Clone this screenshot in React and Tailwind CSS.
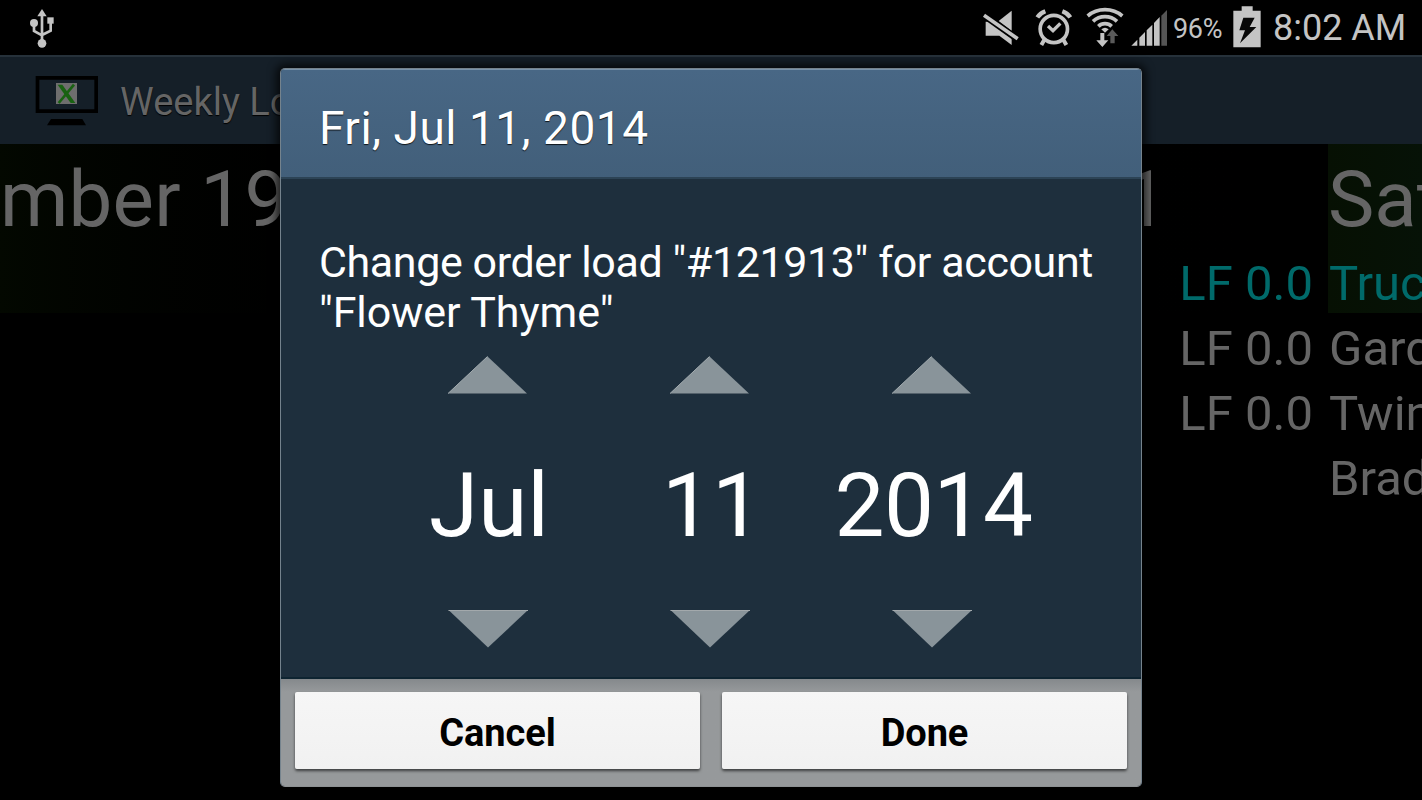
function UsbIcon() {
  return (
    <svg className="h-[42px] w-[28px]" viewBox="84 21 84 126" fill="#c4c4c4">
      <path d="M126 27l14 22h-28z" />
      <path d="M126 45v80M102 70v23l24 13M152 68v24l-26 13" fill="none" stroke="#c4c4c4" strokeWidth="8" />
      <circle cx="126" cy="130" r="13" />
      <circle cx="102" cy="69" r="12" />
      <path d="M142 52h19v19h-19z" />
    </svg>
  );
}

function MuteIcon() {
  return (
    <svg className="h-[40px] w-[38px]" viewBox="36 24 114 120" fill="#c4c4c4">
      <path d="M125 32v60L86 63z" />
      <path d="M47 65h10l68 50v20L88 107H47z" />
      <path d="M42 46l101 72" stroke="#000" strokeWidth="20" />
      <path d="M42 46l101 70" stroke="#c4c4c4" strokeWidth="11" />
    </svg>
  );
}

function AlarmIcon() {
  return (
    <svg className="h-[40px] w-[38px]" viewBox="195 24 114 120" fill="none" stroke="#c4c4c4">
      <circle cx="251.500" cy="87" r="41" strokeWidth="11" />
      <path d="M202 52q8-12 24-18M301 52q-8-12-24-18" strokeWidth="13" />
      <path d="M223 119l-9 16M280 119l9 16" strokeWidth="12" />
      <path d="M234 78l15 14 22-22" strokeWidth="10" />
    </svg>
  );
}

function WifiIcon() {
  return (
    <svg className="h-[42px] w-[40px]" viewBox="345 18 120 126" fill="none">
      <g stroke="#c4c4c4" strokeWidth="11">
        <path d="M353 48q22-19 52-19t52 19" />
        <path d="M369 64q15-14 36-14t36 14" />
        <path d="M385 79q8-8 20-8t20 8" />
      </g>
      <path d="M394 88q11-9 22 0l-11 10z" fill="#c4c4c4" />
      <path d="M391 99h12v22h12l-18 20-18-20h12z" fill="#c4c4c4" />
      <path d="M427 88l18 20h-11v22h-13v-22h-11z" fill="#5a5a5a" />
    </svg>
  );
}

function SignalIcon() {
  return (
    <svg className="h-[38px] w-[37px]" viewBox="485 26 111 114" fill="#c4c4c4">
      <path d="M486 136l18-18v18zM510 136v-24l17-17v41zM532 136V90l17-17v63zM554 136V68l17-18v86z" />
      <path d="M576 136V46l17-17v107z" fill="#555" />
    </svg>
  );
}

function BatteryIcon() {
  return (
    <svg className="h-[42px] w-[28px]" viewBox="219 17 84 126">
      <path d="M245 18h33v13h24v110h-82V31h25z" fill="#c4c4c4" />
      <path d="M250 52h34l-15 28h20l-49 49 15-39h-17z" fill="#080808" />
    </svg>
  );
}

function AppIcon() {
  return (
    <svg className="h-[52px] w-[64px]" viewBox="105 225 192 156">
      <path d="M112.500 233.500h176v100h-176z" fill="none" stroke="#000" strokeWidth="11" />
      <path d="M153 357h94l11 19H141z" fill="#000" />
      <path d="M168 249h63v63h-63z" fill="#6e6e6e" />
      <path d="M173 254h14l39 55h-14z" fill="#196212" />
      <path d="M222 254l-46 55" stroke="#196212" strokeWidth="8" />
    </svg>
  );
}

function StatusBar() {
  return (
    <div className="flex h-[55px] items-start bg-black pl-[28px] text-[#c4c4c4]">
      <div className="pt-[7px]"><UsbIcon /></div>
      <div className="ml-auto flex w-[440px] items-start">
        <div className="pt-[8px]"><MuteIcon /></div>
        <div className="ml-[15px] pt-[8px]"><AlarmIcon /></div>
        <div className="ml-[12px] pt-[6px]"><WifiIcon /></div>
        <div className="ml-[6px] pt-[9px]"><SignalIcon /></div>
        <span className="ml-[5px] w-[49px] pt-[9px] text-[27px] leading-[40px] tracking-[-0.3px] whitespace-nowrap">96%</span>
        <div className="ml-[11px] pt-[6px]"><BatteryIcon /></div>
        <span className="ml-[12px] pt-[8px] text-[36px] leading-[41px] whitespace-nowrap">8:02 AM</span>
      </div>
    </div>
  );
}

function DayColumn({ title, lead, rows, className, headClass, titleClass, rowClass }) {
  return (
    <div className={`shrink-0 overflow-hidden whitespace-nowrap ${className}`}>
      <div className={`h-[169px] pt-[11px] ${headClass}`}>
        <div className={`text-[78px] leading-[90px] ${titleClass}`}>{title}</div>
        <div className={`pt-[9px] text-[49px] leading-[59px] text-[#006a6a] ${rowClass}`}>{lead}</div>
      </div>
      <div className={`pt-[3px] text-[49px] leading-[65px] ${rowClass}`}>
        {rows.map((row, i) => (
          <div key={i}>{row}</div>
        ))}
      </div>
    </div>
  );
}

function Picker({ value, className }) {
  return (
    <div className="flex w-[222px] flex-col items-center">
      <svg className="h-[38px] w-[80px]" viewBox="0 0 80 38">
        <path d="M39.500 0.500L79 37.500H0z" fill="#89949a" />
        <path d="M0 37.500L39.500 0.500" stroke="#a3acb0" />
      </svg>
      <div className={`h-[216px] pt-[8px] text-[89px] leading-[208px] whitespace-nowrap ${className}`}>{value}</div>
      <svg className="h-[38px] w-[80px]" viewBox="0 0 80 38">
        <path d="M0.500 0h79.500L40 37.500z" fill="#89949a" />
        <path d="M0.500 0.500h79.500" stroke="#a3a9ac" />
      </svg>
    </div>
  );
}

function DialogButton({ children }) {
  return (
    <button className="h-[77px] flex-1 rounded-[2px] bg-linear-to-b from-[#f6f6f6] to-[#f1f1f1] pt-[5px] text-[38px] leading-[72px] font-bold text-black shadow-[0_2px_3px_rgba(0,0,0,0.6)]">
      <span className="tracking-[-0.1px]">{children}</span>
    </button>
  );
}

function DateDialog() {
  return (
    <div className="absolute top-[68px] left-[280px] flex h-[719px] w-[862px] flex-col overflow-hidden rounded-[5px] border border-[#75838d] border-b-[#8d9193] bg-[#1e2f3d] text-white shadow-[0_0_8px_4px_rgba(0,0,0,0.7)]">
      <div className="h-[110px] border-t border-b-2 border-t-[#7892aa] border-b-[#2c4355] bg-linear-to-b from-[#486785] to-[#425f7a] pt-[1px] pl-[38px] text-[46px] leading-[114px] tracking-[0.5px] whitespace-nowrap [text-shadow:0_1px_1px_rgba(0,0,0,0.8)]">
        Fri, Jul 11, 2014
      </div>
      <div className="flex h-[500px] flex-col border-b-2 border-[#0e2431] pt-[58px]">
        <p className="pl-[38px] text-[43px] leading-[50px] whitespace-nowrap">
          <span className="tracking-[-0.4px]">Change order load "#121913" for account</span>
          <br />
          <span className="tracking-[-0.1px]">"Flower Thyme"</span>
        </p>
        <div className="mt-[19px] flex pl-[96px]">
          <Picker value="Jul" className="pl-[2px]" />
          <Picker value="11" className="pl-[4px]" />
          <Picker value="2014" className="pl-[3px] tracking-[-0.5px]" />
        </div>
      </div>
      <div className="flex flex-1 items-start gap-[22px] bg-linear-to-b from-[#85898c] via-[#96999b] via-12% to-[#96999b] px-[14px] pt-[13px]">
        <DialogButton>Cancel</DialogButton>
        <DialogButton>Done</DialogButton>
      </div>
    </div>
  );
}

export default function App() {
  return (
    <div className="relative h-[800px] w-[1422px] overflow-hidden bg-black font-[Roboto,sans-serif] text-[#656565]">
      <StatusBar />
      <header className="flex h-[89px] border-t-2 border-[#26313a] bg-[#151f28] pt-[18px] pl-[35px]">
        <AppIcon />
        <span className="ml-[21px] text-[38px] leading-[55px] [text-shadow:0_1px_1px_#000]">Weekly Lo</span>
      </header>
      <main className="flex">
        <DayColumn
          title="mber 19"
          rows={[]}
          className="w-[448px]"
          headClass="bg-linear-to-r from-[#030800] to-black"
          titleClass="tracking-[0.2px]"
          rowClass=""
        />
        <DayColumn
          title="11"
          lead="LF 0.0"
          rows={["LF 0.0", "LF 0.0"]}
          className="w-[880px]"
          headClass="bg-linear-to-r from-[#061003] to-black"
          titleClass="pr-[161px] text-right"
          rowClass="pr-[15px] text-right"
        />
        <DayColumn
          title="Sat"
          lead="Truc"
          rows={["Gard", "Twin", "Brad"]}
          className="w-[94px]"
          headClass="bg-linear-to-r from-[#061003] to-[#061207]"
          titleClass=""
          rowClass="pl-px"
        />
      </main>
      <DateDialog />
    </div>
  );
}
